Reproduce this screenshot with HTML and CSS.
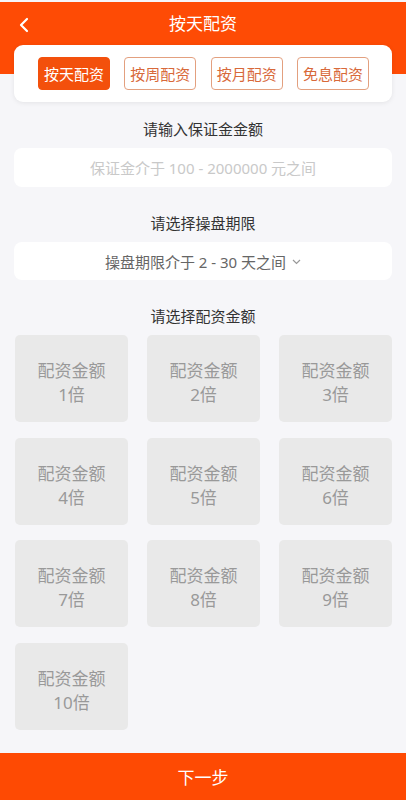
FILE: index.html
```html
<!DOCTYPE html>
<html lang="zh">
<head>
<meta charset="utf-8">
<title>按天配资</title>
<link rel="stylesheet" href="styles.css">
</head>
<body>
<div class="page">
  <header class="header">
    <div class="title-row">
      <span class="back">
        <svg width="12" height="16" viewBox="0 0 12 16"><polyline points="9,2 3,8 9,14" fill="none" stroke="#fff" stroke-width="2.2" stroke-linecap="round" stroke-linejoin="round"/></svg>
      </span>
      <h1 class="title">按天配资</h1>
    </div>
  </header>
  <nav class="tabs">
    <span class="tab active">按天配资</span>
    <span class="tab">按周配资</span>
    <span class="tab">按月配资</span>
    <span class="tab">免息配资</span>
  </nav>
  <main class="form">
    <div class="label first">请输入保证金金额</div>
    <div class="field placeholder">保证金介于 100 - 2000000 元之间</div>
    <div class="label">请选择操盘期限</div>
    <div class="field select">操盘期限介于 2 - 30 天之间
      <svg class="caret" width="9" height="6" viewBox="0 0 9 6"><polyline points="1,1 4.5,4.5 8,1" fill="none" stroke="#999" stroke-width="1.2"/></svg>
    </div>
    <div class="label">请选择配资金额</div>
    <div class="grid">
      <div class="cell"><span>配资金额</span><span>1倍</span></div>
      <div class="cell"><span>配资金额</span><span>2倍</span></div>
      <div class="cell"><span>配资金额</span><span>3倍</span></div>
      <div class="cell"><span>配资金额</span><span>4倍</span></div>
      <div class="cell"><span>配资金额</span><span>5倍</span></div>
      <div class="cell"><span>配资金额</span><span>6倍</span></div>
      <div class="cell"><span>配资金额</span><span>7倍</span></div>
      <div class="cell"><span>配资金额</span><span>8倍</span></div>
      <div class="cell"><span>配资金额</span><span>9倍</span></div>
      <div class="cell"><span>配资金额</span><span>10倍</span></div>
    </div>
  </main>
  <button class="next">下一步</button>
</div>
</body>
</html>
```

FILE: styles.css
```css
* { box-sizing: border-box; }
html, body { margin: 0; padding: 0; }
body {
  background: #f6f6f9;
  font-family: "Noto Sans", "Noto Sans CJK SC", sans-serif;
  color: #333;
}
.page {
  padding-top: 2px;
  background: #f6f6f9;
  min-height: 800px;
}
.header {
  height: 72px;
  background: #fe4b05;
}
.title-row {
  height: 44px;
  display: flex;
  align-items: center;
  justify-content: center;
  position: relative;
}
.back {
  position: absolute;
  left: 18px;
  top: 15px;
  display: flex;
}
.title {
  margin: 0;
  font-size: 17px;
  font-weight: 400;
  color: #fff;
  line-height: 44px;
}
.tabs {
  position: relative;
  margin: -29px 14px 0;
  height: 57px;
  background: #fff;
  border-radius: 9px;
  box-shadow: 0 1px 5px rgba(0,0,0,0.08);
  display: flex;
  align-items: center;
  justify-content: space-between;
  padding: 0 23px 0 24px;
}
.tab {
  width: 72px;
  height: 33px;
  border: 1px solid #e3a07f;
  border-radius: 4px;
  color: #d8693a;
  font-size: 15px;
  display: flex;
  align-items: center;
  justify-content: center;
}
.tab.active {
  background: #f3500c;
  border-color: #f3500c;
  color: #fff;
}
.form {
  padding: 0 14px 80px;
}
.label {
  text-align: center;
  font-size: 15px;
  line-height: 22px;
  color: #333;
  margin-top: 25px;
  margin-bottom: 8px;
}
.label.first { margin-top: 16px; }
.field {
  height: 39px;
  background: #fff;
  border-radius: 8px;
  display: flex;
  align-items: center;
  justify-content: center;
  font-size: 15px;
}
.placeholder { color: #c9c9c9; }
.select { color: #666; height: 38px; }
.caret { margin-left: 6px; margin-top: 1px; }
.grid {
  display: grid;
  grid-template-columns: repeat(3, 1fr);
  column-gap: 19px;
  row-gap: 15.5px;
  margin-top: 0;
  padding: 0 0 0 1px;
}
.cell {
  height: 87px;
  background: #e9e9e9;
  border-radius: 5px;
  display: flex;
  flex-direction: column;
  align-items: center;
  justify-content: center;
  padding-top: 9px;
  color: #999;
  font-size: 17px;
  line-height: 24px;
}
.next {
  position: fixed;
  left: 0;
  right: 0;
  bottom: 0;
  height: 47px;
  border: 0;
  background: #fe4a03;
  color: #fff;
  font-family: "Noto Sans", "Noto Sans CJK SC", sans-serif;
  font-size: 17px;
  width: 100%;
}
```
